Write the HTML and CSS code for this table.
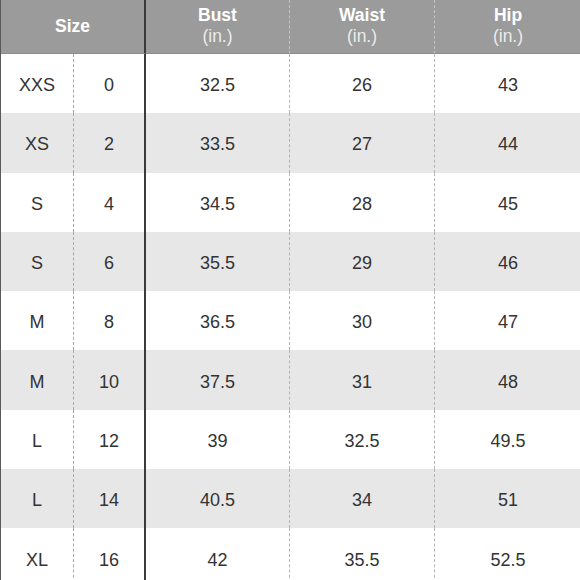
FILE: index.html
```html
<!DOCTYPE html>
<html>
<head>
<meta charset="utf-8">
<link rel="stylesheet" href="styles.css">
</head>
<body>
<div class="chart">
  <div class="hd size">Size</div>
  <div class="hd c-bust"><span class="name">Bust</span><span class="unit">(in.)</span></div>
  <div class="hd c-waist"><span class="name">Waist</span><span class="unit">(in.)</span></div>
  <div class="hd c-hip"><span class="name">Hip</span><span class="unit">(in.)</span></div>

  <div class="row"><div class="cell c-a">XXS</div><div class="cell c-n">0</div><div class="cell c-bust">32.5</div><div class="cell c-waist">26</div><div class="cell c-hip">43</div></div>
  <div class="row alt"><div class="cell c-a">XS</div><div class="cell c-n">2</div><div class="cell c-bust">33.5</div><div class="cell c-waist">27</div><div class="cell c-hip">44</div></div>
  <div class="row"><div class="cell c-a">S</div><div class="cell c-n">4</div><div class="cell c-bust">34.5</div><div class="cell c-waist">28</div><div class="cell c-hip">45</div></div>
  <div class="row alt"><div class="cell c-a">S</div><div class="cell c-n">6</div><div class="cell c-bust">35.5</div><div class="cell c-waist">29</div><div class="cell c-hip">46</div></div>
  <div class="row"><div class="cell c-a">M</div><div class="cell c-n">8</div><div class="cell c-bust">36.5</div><div class="cell c-waist">30</div><div class="cell c-hip">47</div></div>
  <div class="row alt"><div class="cell c-a">M</div><div class="cell c-n">10</div><div class="cell c-bust">37.5</div><div class="cell c-waist">31</div><div class="cell c-hip">48</div></div>
  <div class="row"><div class="cell c-a">L</div><div class="cell c-n">12</div><div class="cell c-bust">39</div><div class="cell c-waist">32.5</div><div class="cell c-hip">49.5</div></div>
  <div class="row alt"><div class="cell c-a">L</div><div class="cell c-n">14</div><div class="cell c-bust">40.5</div><div class="cell c-waist">34</div><div class="cell c-hip">51</div></div>
  <div class="row"><div class="cell c-a">XL</div><div class="cell c-n">16</div><div class="cell c-bust">42</div><div class="cell c-waist">35.5</div><div class="cell c-hip">52.5</div></div>
</div>
</body>
</html>
```
FILE: styles.css
```css
html, body {
  margin: 0;
  padding: 0;
  background: #ffffff;
  overflow: hidden;
}
body {
  width: 580px;
  height: 580px;
  font-family: "Liberation Sans", Arial, sans-serif;
}
.chart {
  display: grid;
  grid-template-columns: 73px 72px 144px 145px 146px;
  grid-template-rows: 54px repeat(9, 59.3px);
  border-left: 1px solid #5a5a5a;
  box-sizing: border-box;
  width: 580px;
}
.row {
  display: contents;
}
.hd {
  background: #9b9b9b;
  color: #ffffff;
  display: flex;
  flex-direction: column;
  align-items: center;
  justify-content: center;
  border-bottom: 1px solid #8c8c8c;
  box-sizing: border-box;
  font-size: 17.5px;
  line-height: 21px;
  padding-bottom: 2px;
}
.hd.size {
  grid-column: 1 / 3;
  font-weight: bold;
  border-right: 2px solid #3a3a3a;
  padding-bottom: 0;
}
.hd .name {
  font-weight: bold;
}
.hd .unit {
  color: rgba(255, 255, 255, 0.82);
  font-weight: normal;
}
.hd.c-bust, .hd.c-waist {
  border-right: 1px dashed #c4c4c4;
}
.cell {
  display: flex;
  align-items: center;
  justify-content: center;
  box-sizing: border-box;
  padding-top: 4px;
  font-size: 18px;
  color: #333333;
  background: #ffffff;
}
.row.alt .cell {
  background: #e7e7e7;
}
.cell.c-a {
  border-right: 1px dashed #a8a8a8;
}
.cell.c-n {
  border-right: 2px solid #3a3a3a;
}
.cell.c-bust, .cell.c-waist {
  border-right: 1px dashed #b4b4b4;
}
```
